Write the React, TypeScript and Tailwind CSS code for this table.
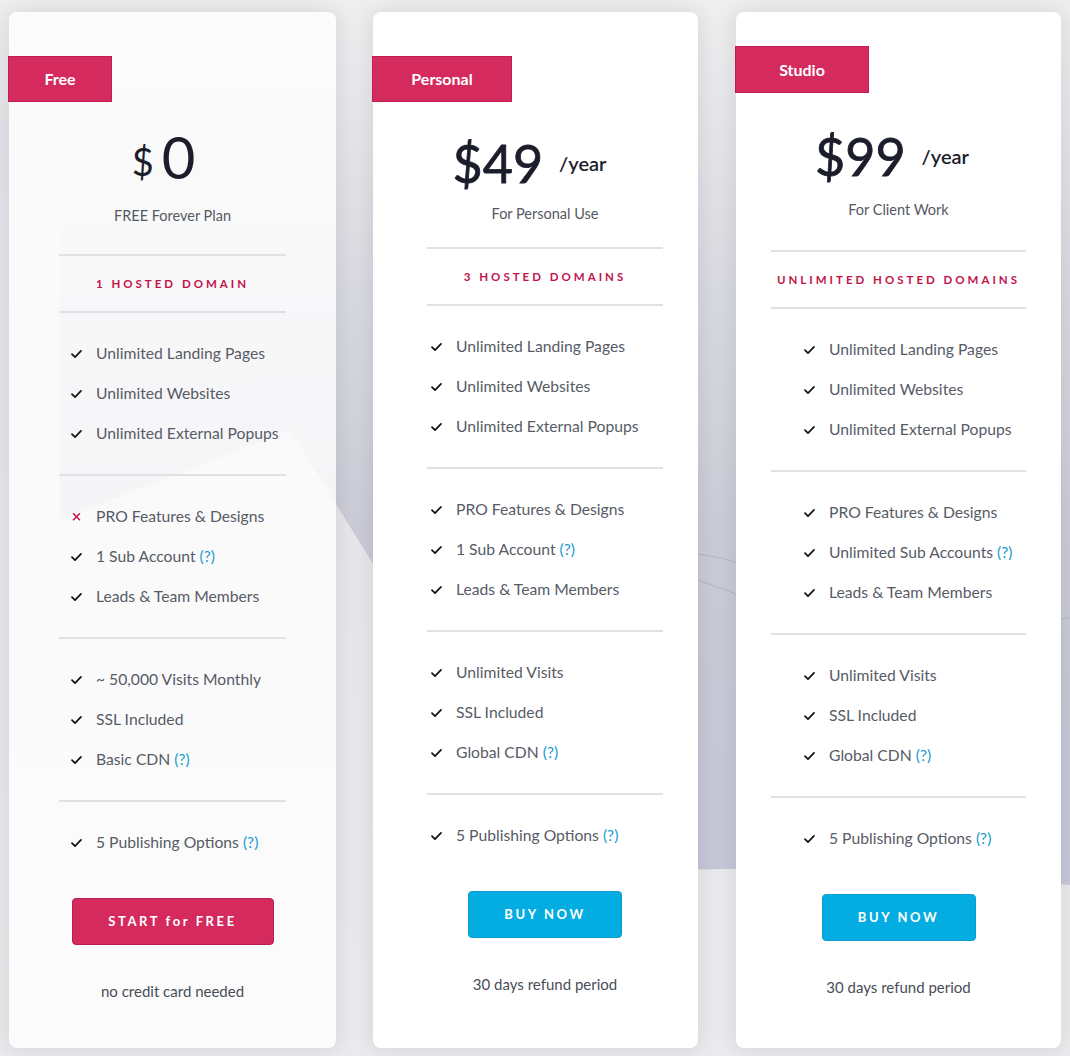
import React from 'react';

type Feature = { text: string; help?: boolean; no?: boolean };

const Check = () => (
  <svg width="11" height="10" viewBox="0 0 11 10" className="shrink-0">
    <path d="M1 5.2 L4 8.2 L10 1.8" fill="none" stroke="#111" strokeWidth="1.7" strokeLinecap="round" strokeLinejoin="round" />
  </svg>
);

const Cross = () => (
  <svg width="11" height="10" viewBox="0 0 11 10" className="shrink-0">
    <path d="M2.5 1.8 L8.5 7.8 M8.5 1.8 L2.5 7.8" fill="none" stroke="#c2134b" strokeWidth="1.5" strokeLinecap="round" />
  </svg>
);

const Divider = () => <div className="h-[2px] bg-[#e1e1e4]" />;

const FeatureList: React.FC<{ items: Feature[]; indent: string; last?: boolean }> = ({ items, indent, last }) => (
  <ul className={`${indent} ${last ? 'pt-[21px]' : 'pt-[21px] pb-[20px]'}`}>
    {items.map((f) => (
      <li key={f.text} className="h-10 flex items-center gap-[14px] text-[15.7px] text-[#575b66]">
        {f.no ? <Cross /> : <Check />}
        <span>
          {f.text}
          {f.help && <span className="text-[#1a9bcf]"> (?)</span>}
        </span>
      </li>
    ))}
  </ul>
);

interface CardProps {
  cardClass: string;
  badge: string;
  badgeClass: string;
  header: string;
  priceRow: React.ReactNode;
  priceClass: string;
  subtitle: string;
  subClass: string;
  inner: string;
  indent: string;
  domain: string;
  groups: Feature[][];
  publishing: Feature[];
  button: string;
  buttonClass: string;
  note: string;
}

const Card: React.FC<CardProps> = (p) => (
  <div className={`relative z-10 h-[1036px] rounded-[8px] shadow-[0_0_22px_rgba(40,40,60,0.13)] ${p.cardClass}`}>
    {/* Header */}
    <div className={`flex flex-col ${p.header}`}>
      <div className={`-ml-px flex items-center justify-center bg-[#d42a5e] border border-[#c11d50] text-white text-[16px] font-bold ${p.badgeClass}`}>
        {p.badge}
      </div>
      <div className={`flex items-center justify-center text-[#1b1d2b] ${p.priceClass}`}>{p.priceRow}</div>
      <div className={`${p.inner} text-center text-[14.5px] leading-5 text-[#555963] ${p.subClass}`}>{p.subtitle}</div>
    </div>

    <div className={p.inner}>
      <Divider />
      <div className="h-[55px] flex items-center justify-center text-[11.5px] font-bold tracking-[3px] text-[#c2134b]">
        {p.domain}
      </div>
      {p.groups.map((g, i) => (
        <React.Fragment key={i}>
          <Divider />
          <FeatureList items={g} indent={p.indent} />
        </React.Fragment>
      ))}
      <Divider />
      <FeatureList items={p.publishing} indent={p.indent} last />

      <div className="flex justify-center mt-[35px]">
        <button className={`h-[47px] rounded-[4px] text-white text-[13px] font-bold tracking-[2.6px] ${p.buttonClass}`}>
          {p.button}
        </button>
      </div>
      <div className="mt-[36px] text-center text-[15px] leading-5 text-[#4a4d57]">{p.note}</div>
    </div>
  </div>
);

const Background = () => (
  <svg className="absolute inset-0 w-full h-full" viewBox="0 0 1070 1056" preserveAspectRatio="none">
    <defs>
      <linearGradient id="bg" x1="0" y1="0" x2="0" y2="1">
        <stop offset="0" stopColor="#efeff0" />
        <stop offset="0.28" stopColor="#d9dae0" />
        <stop offset="0.5" stopColor="#cbccd6" />
        <stop offset="0.83" stopColor="#c6c7d8" />
        <stop offset="1" stopColor="#ececee" />
      </linearGradient>
      <linearGradient id="light" x1="0" y1="0" x2="0" y2="1">
        <stop offset="0" stopColor="#e4e4e9" />
        <stop offset="1" stopColor="#ebebee" />
      </linearGradient>
    </defs>
    <rect x="0" y="0" width="1070" height="1056" fill="url(#bg)" />
    <path d="M0 120 L60 120 L60 520 L290 430 L380 575 L380 1056 L0 1056 Z" fill="url(#light)" />
    <path d="M560 1056 L560 880 C700 860 900 870 1070 885 L1070 1056 Z" fill="#ebebed" />
    <path d="M690 553 C715 556 730 560 745 565" stroke="#b4b5c6" strokeWidth="1" fill="none" />
    <path d="M690 578 C715 585 730 592 745 598" stroke="#b4b5c6" strokeWidth="1" fill="none" />
    <path d="M1055 620 C1062 619 1066 618 1070 618" stroke="#b4b5c6" strokeWidth="1" fill="none" />
  </svg>
);

export default function App() {
  return (
    <div className="relative w-[1070px] h-[1056px] overflow-hidden font-['Lato',sans-serif]">
      <Background />
      <div className="relative flex pt-[12px] pl-[9px]">
        <Card
          cardClass="w-[327px] bg-white/80"
          badge="Free"
          badgeClass="w-[104px] h-[46px] mt-[44px]"
          header="h-[242px]"
          priceClass="h-[80px] mt-[15px] pr-[18px] gap-[8px]"
          priceRow={
            <>
              <span className="text-[38px] leading-none mt-[8px]">$</span>
              <span className="text-[58px] leading-none">0</span>
            </>
          }
          subtitle="FREE Forever Plan"
          subClass="mt-[9px]"
          inner="px-[50px]"
          indent="pl-[12px]"
          domain="1 HOSTED DOMAIN"
          groups={[
            [{ text: 'Unlimited Landing Pages' }, { text: 'Unlimited Websites' }, { text: 'Unlimited External Popups' }],
            [{ text: 'PRO Features & Designs', no: true }, { text: '1 Sub Account', help: true }, { text: 'Leads & Team Members' }],
            [{ text: '~ 50,000 Visits Monthly' }, { text: 'SSL Included' }, { text: 'Basic CDN', help: true }],
          ]}
          publishing={[{ text: '5 Publishing Options', help: true }]}
          button="START for FREE"
          buttonClass="w-[202px] bg-[#d42a5e] border border-[#b81d4e]"
          note="no credit card needed"
        />
        <Card
          cardClass="w-[325px] ml-[37px] bg-white"
          badge="Personal"
          badgeClass="w-[140px] h-[46px] mt-[44px]"
          header="h-[235px]"
          priceClass="h-[80px] mt-[21px] pr-[12px] gap-[16px]"
          priceRow={
            <>
              <span className="text-[52px] leading-none [-webkit-text-stroke:0.8px_#1b1d2b]">$49</span>
              <span className="text-[20px] font-semibold leading-none">/year</span>
            </>
          }
          subtitle="For Personal Use"
          subClass="mt-[1px]"
          inner="pl-[54px] pr-[35px]"
          indent="pl-[4px]"
          domain="3 HOSTED DOMAINS"
          groups={[
            [{ text: 'Unlimited Landing Pages' }, { text: 'Unlimited Websites' }, { text: 'Unlimited External Popups' }],
            [{ text: 'PRO Features & Designs' }, { text: '1 Sub Account', help: true }, { text: 'Leads & Team Members' }],
            [{ text: 'Unlimited Visits' }, { text: 'SSL Included' }, { text: 'Global CDN', help: true }],
          ]}
          publishing={[{ text: '5 Publishing Options', help: true }]}
          button="BUY NOW"
          buttonClass="w-[154px] bg-[#04ade1] border border-[#0a9ccc]"
          note="30 days refund period"
        />
        <Card
          cardClass="w-[325px] ml-[38px] bg-white"
          badge="Studio"
          badgeClass="w-[134px] h-[47px] mt-[34px]"
          header="h-[238px]"
          priceClass="h-[80px] mt-[23px] pr-[13px] gap-[16px]"
          priceRow={
            <>
              <span className="text-[52px] leading-none [-webkit-text-stroke:0.8px_#1b1d2b]">$99</span>
              <span className="text-[20px] font-semibold leading-none">/year</span>
            </>
          }
          subtitle="For Client Work"
          subClass="mt-[4px]"
          inner="px-[35px]"
          indent="pl-[33px]"
          domain="UNLIMITED HOSTED DOMAINS"
          groups={[
            [{ text: 'Unlimited Landing Pages' }, { text: 'Unlimited Websites' }, { text: 'Unlimited External Popups' }],
            [{ text: 'PRO Features & Designs' }, { text: 'Unlimited Sub Accounts', help: true }, { text: 'Leads & Team Members' }],
            [{ text: 'Unlimited Visits' }, { text: 'SSL Included' }, { text: 'Global CDN', help: true }],
          ]}
          publishing={[{ text: '5 Publishing Options', help: true }]}
          button="BUY NOW"
          buttonClass="w-[154px] bg-[#04ade1] border border-[#0a9ccc]"
          note="30 days refund period"
        />
      </div>
    </div>
  );
}
